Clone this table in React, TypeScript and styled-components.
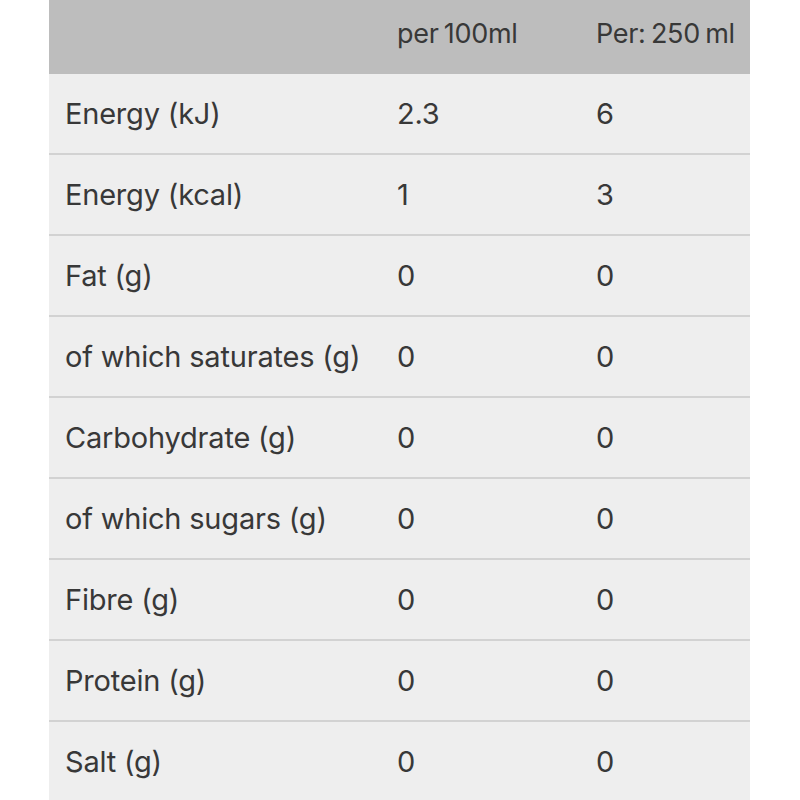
import React from "react";
import styled, { createGlobalStyle } from "styled-components";

const Global = createGlobalStyle`
  html, body { margin: 0; padding: 0; background: #ffffff; }
  body { font-family: Inter, "Noto Sans", sans-serif; }
`;

const Page = styled.div`
  width: 800px;
  height: 800px;
  overflow: hidden;
  display: flex;
  justify-content: center;
`;

const Table = styled.div`
  width: 701px;
  margin-left: -1px;
  display: grid;
  grid-template-columns: 332px 199px minmax(0, 1fr);
  align-content: start;
  background: #eeeeee;
`;

const HeaderCell = styled.div`
  height: 74px;
  background: #bdbdbd;
  display: flex;
  align-items: center;
  padding: 0 0 8px 16px;
  box-sizing: border-box;
  font-size: 27px;
  color: #383838;
  letter-spacing: -0.3px;
  word-spacing: -2px;
  white-space: nowrap;
  overflow: hidden;
`;

const Cell = styled.div<{ $last?: boolean }>`
  height: 79px;
  display: flex;
  align-items: center;
  padding: 0 16px;
  font-size: 29px;
  color: #383838;
  letter-spacing: -0.2px;
  white-space: nowrap;
  border-bottom: 2px solid ${(p) => (p.$last ? "transparent" : "#d2d2d2")};
`;

const rows: [string, string, string][] = [
  ["Energy (kJ)", "2.3", "6"],
  ["Energy (kcal)", "1", "3"],
  ["Fat (g)", "0", "0"],
  ["of which saturates (g)", "0", "0"],
  ["Carbohydrate (g)", "0", "0"],
  ["of which sugars (g)", "0", "0"],
  ["Fibre (g)", "0", "0"],
  ["Protein (g)", "0", "0"],
  ["Salt (g)", "0", "0"],
];

export default function App() {
  return (
    <>
      <Global />
      <Page>
        <Table>
          <HeaderCell />
          <HeaderCell>per 100ml</HeaderCell>
          <HeaderCell>Per: 250 ml</HeaderCell>
          {rows.map((r, i) =>
            r.map((c, j) => (
              <Cell key={`${i}-${j}`} $last={i === rows.length - 1}>
                {c}
              </Cell>
            ))
          )}
        </Table>
      </Page>
    </>
  );
}
